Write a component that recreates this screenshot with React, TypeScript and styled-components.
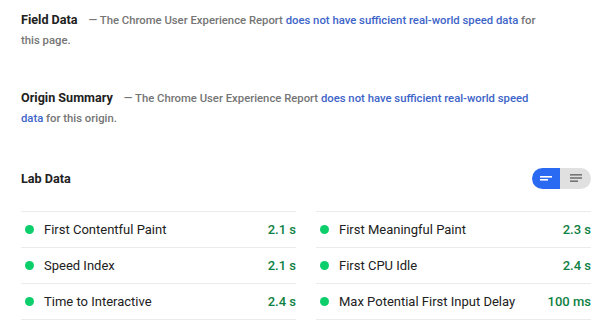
import styled, { createGlobalStyle } from "styled-components";

const GlobalStyle = createGlobalStyle`
  body {
    margin: 0;
    background: #fff;
    font-family: Roboto, "Liberation Sans", sans-serif;
  }
`;

const Page = styled.div`
  width: 608px;
  height: 323px;
  box-sizing: border-box;
  padding: 11px 17px 0 21px;
  overflow: hidden;
`;

const Notice = styled.p<{ gap: number }>`
  margin: 0 0 ${(p) => p.gap}px;
  font-size: 11.3px;
  line-height: 20px;
  color: #757575;
  font-weight: 500;
  padding-right: 50px;
`;

const NoticeTitle = styled.span`
  font-size: 12.6px;
  line-height: 18px;
  font-weight: 700;
  color: #212121;
  margin-right: 11px;
`;

const Link = styled.a`
  color: #3d64c8;
  text-decoration: none;
`;

const LabHeader = styled.div`
  display: flex;
  align-items: center;
  justify-content: space-between;
  height: 22px;
  margin-bottom: 22px;
`;

const LabTitle = styled.span`
  font-size: 12.6px;
  font-weight: 700;
  color: #212121;
`;

const Toggle = styled.div`
  display: flex;
  height: 21px;
  border-radius: 11px;
  overflow: hidden;
`;

const ToggleHalf = styled.div<{ active?: boolean }>`
  width: ${(p) => (p.active ? 28 : 31)}px;
  display: flex;
  align-items: center;
  justify-content: center;
  background: ${(p) => (p.active ? "#2a6af3" : "#e0e0e0")};
`;

const Grid = styled.div`
  display: grid;
  grid-template-columns: 275px 275px;
  column-gap: 20px;
`;

const Row = styled.div`
  display: flex;
  align-items: center;
  height: 35px;
  border-top: 1px solid #ebebeb;
  padding-left: 4px;
  font-size: 13px;
  color: #212121;
`;

const Dot = styled.span`
  width: 9px;
  height: 9px;
  border-radius: 50%;
  background: #0cce6b;
  margin-right: 10px;
  flex: none;
`;

const Label = styled.span`
  flex: 1;
`;

const Value = styled.span`
  color: #0d8043;
  font-weight: 500;
`;

const metrics = [
  ["First Contentful Paint", "2.1 s"],
  ["First Meaningful Paint", "2.3 s"],
  ["Speed Index", "2.1 s"],
  ["First CPU Idle", "2.4 s"],
  ["Time to Interactive", "2.4 s"],
  ["Max Potential First Input Delay", "100 ms"],
];

function Lines({ color, long }: { color: string; long?: boolean }) {
  return (
    <svg width="14" height="10" viewBox="0 0 14 10">
      <rect x="1" y={long ? 1 : 3} width="12" height="1.6" fill={color} />
      <rect x="1" y={long ? 4.2 : 6} width={long ? 12 : 8} height="1.6" fill={color} />
      {long && <rect x="1" y="7.4" width="8" height="1.6" fill={color} />}
    </svg>
  );
}

export default function App() {
  return (
    <>
      <GlobalStyle />
      <Page>
        <Notice gap={38}>
          <NoticeTitle>Field Data</NoticeTitle>— The Chrome User Experience Report{" "}
          <Link>does not have sufficient real-world speed data</Link> for this page.
        </Notice>
        <Notice gap={38}>
          <NoticeTitle>Origin Summary</NoticeTitle>— The Chrome User Experience Report{" "}
          <Link>does not have sufficient real-world speed data</Link> for this origin.
        </Notice>
        <LabHeader>
          <LabTitle>Lab Data</LabTitle>
          <Toggle>
            <ToggleHalf active>
              <Lines color="#fff" />
            </ToggleHalf>
            <ToggleHalf>
              <Lines color="#757575" long />
            </ToggleHalf>
          </Toggle>
        </LabHeader>
        <Grid>
          {metrics.map(([name, value]) => (
            <Row key={name}>
              <Dot />
              <Label>{name}</Label>
              <Value>{value}</Value>
            </Row>
          ))}
          <Row />
          <Row />
        </Grid>
      </Page>
    </>
  );
}
